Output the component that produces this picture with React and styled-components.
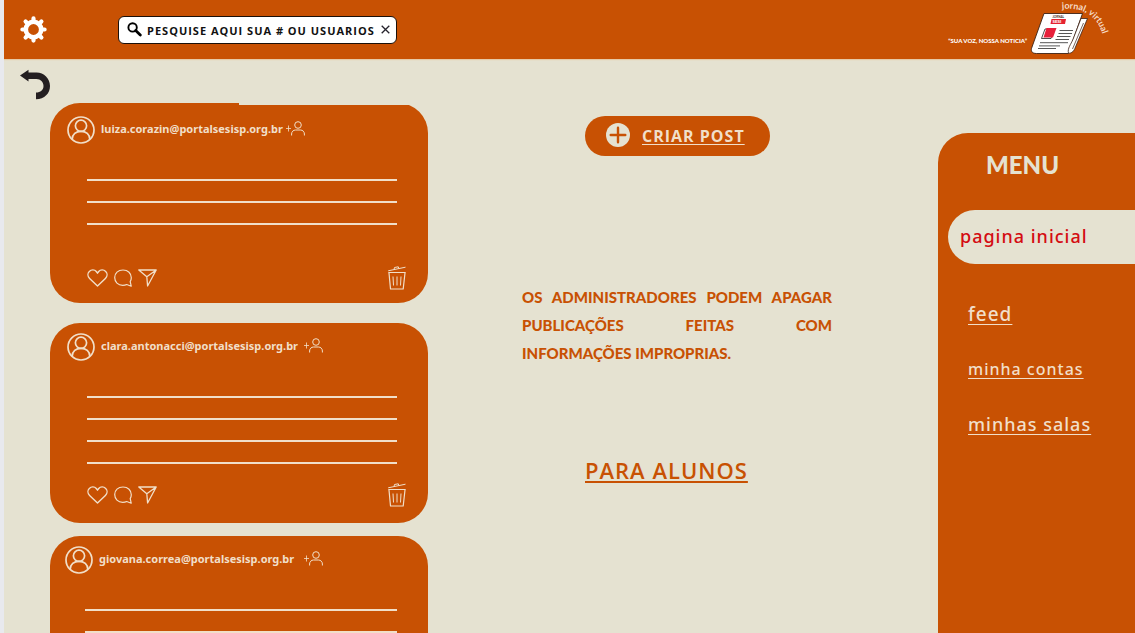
import React from "react";
import styled, { createGlobalStyle } from "styled-components";

const orange = "#c85103";
const sand = "#e5e2d1";
const cream = "#f1dfc9";

const GlobalStyle = createGlobalStyle`
  * { box-sizing: border-box; }
  body { margin: 0; background: ${sand}; font-family: "Noto Sans", sans-serif; }
  button { padding: 0; border: 0; background: none; font: inherit; color: inherit; cursor: pointer; }
  a { color: inherit; }
  svg { display: block; }
`;

const Page = styled.div`
  display: flex;
  flex-direction: column;
  height: 100vh;
  overflow: hidden;
  border-left: 4px solid #e8e9ee;
  background: ${sand};
`;

const TopBar = styled.header`
  display: flex;
  flex: none;
  align-items: center;
  height: 59px;
  padding: 0 22px 0 16px;
  background: ${orange};
  box-shadow: 0 1px 1px #e6c9a6;
`;

const IconButton = styled.button`
  flex: none;
  display: flex;
  align-items: center;
  justify-content: center;
`;

const Search = styled.label`
  display: flex;
  align-items: center;
  width: 279px;
  height: 28px;
  margin: 0 auto 0 71px;
  padding: 0 6px 0 8px;
  gap: 5px;
  border: 1px solid #1b1009;
  border-radius: 6px;
  background: #fff;
`;

const SearchInput = styled.input`
  flex: 1;
  min-width: 0;
  padding: 1px 0 0;
  border: 0;
  outline: 0;
  background: none;
  font: 700 11px "Open Sans", sans-serif;
  letter-spacing: 1px;
  color: #111;
  &::placeholder { color: #111; opacity: 1; }
`;

const Brand = styled.div`
  display: flex;
  align-items: flex-start;
  height: 59px;
  gap: 3px;
`;

const Tagline = styled.span`
  padding-top: 37px;
  font: 900 6px/8px Lato, sans-serif;
  color: #fff;
  white-space: nowrap;
`;

const Main = styled.main`
  display: grid;
  flex: 1;
  min-height: 0;
  grid-template-columns: 424fr 510fr 197fr;
`;

const FeedColumn = styled.section`
  min-width: 0;
  padding: 10px 0 0 16px;
  overflow-y: auto;
  scrollbar-width: none;
`;

const Feed = styled.div`
  display: flex;
  flex-direction: column;
  margin: 2px 0 0 30px;
`;

const Card = styled.article`
  position: relative;
  display: flex;
  flex-direction: column;
  min-height: 200px;
  margin-bottom: ${(p) => p.$gap}px;
  padding: ${(p) => p.$top}px 21px ${(p) => 26 - p.$top}px ${(p) => p.$inset}px;
  border-radius: 30px;
  background: ${orange};
  color: ${cream};
`;

const CardEdge = styled.span`
  position: absolute;
  top: 0;
  left: 50%;
  right: 0;
  height: 2px;
  background: ${sand};
`;

const CardHeader = styled.header`
  display: flex;
  align-items: center;
  height: 28px;
`;

const Email = styled.span`
  margin-left: 6px;
  padding-bottom: 3px;
  font: 700 11px "Noto Sans", sans-serif;
  white-space: nowrap;
`;

const FollowButton = styled(IconButton)`
  margin-left: ${(p) => p.$gap}px;
  padding-bottom: 4px;
`;

const Lines = styled.div`
  display: flex;
  flex-direction: column;
  gap: 20px;
  margin: 35px 10px 0 20px;
`;

const Line = styled.span`
  height: 2px;
  background: ${cream};
`;

const CardFooter = styled.footer`
  display: flex;
  align-items: center;
  height: 24px;
  margin-top: auto;
  padding-left: 20px;
  gap: 6px;
`;

const DeleteButton = styled(IconButton)`
  margin-left: auto;
`;

const Center = styled.section`
  display: flex;
  flex-direction: column;
  align-items: flex-start;
  min-width: 0;
  padding: 57px 106px 0 94px;
`;

const CreateButton = styled.button`
  display: flex;
  align-items: center;
  width: 185px;
  height: 40px;
  margin-left: 63px;
  padding-left: 20px;
  gap: 11px;
  border-radius: 20px;
  background: ${orange};
  color: ${cream};
  font: 700 16px "Open Sans", sans-serif;
  letter-spacing: 1px;
  text-decoration: underline;
  text-underline-offset: 2px;
  white-space: nowrap;
`;

const Notice = styled.p`
  margin: 127px 0 0;
  font: 900 15px/28px Lato, sans-serif;
  text-align: justify;
  color: ${orange};
`;

const StudentsLink = styled.a`
  margin: 89px 0 0 63px;
  font: 600 22px/28px "Open Sans", sans-serif;
  letter-spacing: 1px;
  text-underline-offset: 2px;
  color: ${orange};
  white-space: nowrap;
`;

const Menu = styled.nav`
  display: flex;
  flex-direction: column;
  min-width: 0;
  margin-top: 74px;
  border-radius: 30px 0 0 0;
  background: ${orange};
  color: ${cream};
`;

const MenuTitle = styled.h2`
  margin: 16px 0 30px 48px;
  font: 900 24px/31px Lato, sans-serif;
  color: ${sand};
`;

const MenuLink = styled.a`
  display: flex;
  align-items: center;
  height: 55px;
  padding: 0 0 2px 30px;
  font: 500 ${(p) => p.$size}px "Noto Sans", sans-serif;
  letter-spacing: 1px;
  text-underline-offset: 3px;
  white-space: nowrap;
`;

const ActiveLink = styled(MenuLink)`
  height: 54px;
  margin: 0 0 23px 10px;
  padding-left: 12px;
  border-radius: 27px 0 0 27px;
  background: ${sand};
  color: #d40c12;
  text-decoration: none;
`;

const GearIcon = () => (
  <svg width="27" height="27" viewBox="0 0 27 27" fill="none" stroke="#fff">
    <circle cx="13.5" cy="13.5" r="7.7" strokeWidth="4.6" />
    <g strokeWidth="4.2" strokeLinecap="round">
      <path d="M13.5 2.400v2M13.5 22.600v2M2.400 13.5h2M22.600 13.5h2M5.600 5.600l1.400 1.400M20 20l1.400 1.400M5.600 21.400L7 20M20 7l1.400-1.400" />
    </g>
  </svg>
);

const SearchIcon = () => (
  <svg width="15" height="15" viewBox="0 0 15 15" fill="none" stroke="#000">
    <circle cx="5.6" cy="5.4" r="4.2" strokeWidth="1.9" />
    <path d="M8.7 8.6l4.6 4.5" strokeWidth="2.8" strokeLinecap="round" />
  </svg>
);

const CloseIcon = () => (
  <svg width="9" height="9" viewBox="0 0 9 9" stroke="#25222c" strokeWidth="1.3">
    <path d="M.7.7l7.6 7.6M8.3.7L.7 8.3" />
  </svg>
);

const BackIcon = () => (
  <svg width="32" height="32" viewBox="0 0 32 32">
    <path d="M0 6.500L8.500.8v2.700h8C24 3.500 30 9.500 30 17s-5.500 13-14 13.300v-6.800c4.500 0 7.500-2.500 7.500-6.500s-3-7-7-7h-8v2.500z" fill="#241f21" />
  </svg>
);

const PaperLogo = () => (
  <svg width="83" height="56" viewBox="0 0 83 56">
    <path d="M14 13.500h38.500L42 43c-2 6-1 8.500-3.500 10.500H6.500c-5 0-6-3-4.500-6.500z" fill="#fff" stroke="#3b2115" strokeWidth=".9" />
    <path d="M38.500 53.300c-1.300-5 2.500-9 4.500-14L51 18.500h6.500L45.500 47c-1.500 4-3.500 6.300-7 6.300z" fill="#fff" stroke="#3b2115" strokeWidth=".8" />
    <path d="M53.500 23l-11 26" stroke="#3b2115" strokeWidth=".7" />
    <path d="M21.500 19h14.500l-1 5H20.500z" fill="#e52331" />
    <text x="22.500" y="23.400" fontFamily="Lato, sans-serif" fontSize="4.500" fontWeight="900" fill="#fff">SESI</text>
    <text x="22.500" y="18" fontFamily="Lato, sans-serif" fontSize="3" fontWeight="700" fill="#3b2115">JORNAL</text>
    <path d="M15 29h9.500l-3.500 9.500H11.500z" fill="#fff" stroke="#222" strokeWidth=".8" />
    <path d="M16.500 28h10l-3.500 9.500H13.500z" fill="#e7203b" />
    <path d="M29.500 30.500H43M28.500 33.500H42M27 36.500h13.500M25.500 39.500h13.500M10 42.700h28M9 45.900h21M8 48.500h18" stroke="#444" strokeWidth=".9" />
    <path id="brand-arc" d="M32 9C45 8 55 10 62 17C68 22 71 28 75 42" fill="none" />
    <text fontFamily="Lato, sans-serif" fontSize="9" fontWeight="700" fill="#f6dcc8">
      <textPath href="#brand-arc">jornal, virtual</textPath>
    </text>
  </svg>
);

const AvatarIcon = () => (
  <svg width="28" height="28" viewBox="0 0 28 28" fill="none" stroke={cream} strokeWidth="1.7">
    <circle cx="14" cy="14" r="13" />
    <circle cx="14" cy="9.800" r="5.600" />
    <path d="M5.200 23.300c0-5 3.800-8 8.800-8s8.800 3 8.800 8" />
  </svg>
);

const FollowIcon = () => (
  <svg width="19" height="15" viewBox="0 0 19 15" fill="none" stroke={cream}>
    <circle cx="12" cy="4" r="3.300" />
    <path d="M5.600 14.500v-1.500c0-2.300 1.700-4 4-4h4.800c2.300 0 4 1.700 4 4v1.500" />
    <path d="M0 7.500h5M2.500 4.500v6" strokeWidth=".8" />
  </svg>
);

const HeartIcon = () => (
  <svg width="21" height="18" viewBox="0 0 21 18" fill="none" stroke={cream} strokeWidth="1.400" strokeLinejoin="round">
    <path d="M10.500 17L2.600 9.400C.4 7.200.5 4.200 2.300 2.400c2-2 5.200-2 7 .1l1.200 1.700 1.200-1.700c1.800-2.100 5-2.100 7-.1 1.800 1.800 1.900 4.800-.3 7z" />
  </svg>
);

const CommentIcon = () => (
  <svg width="18" height="18" viewBox="0 0 18 18" fill="none" stroke={cream} strokeWidth="1.200" strokeLinejoin="round">
    <path d="M17.200 17.200l-1-4.600c.7-1.100 1.100-2.400 1.100-3.800C17.300 4.300 14 1 9 1S.7 4.300.7 8.600s3.300 7.800 8 7.800c1.600 0 2.900-.3 4-.9z" />
  </svg>
);

const ShareIcon = () => (
  <svg width="19" height="18" viewBox="0 0 19 18" fill="none" stroke={cream} strokeWidth="1.300" strokeLinejoin="round">
    <path d="M.8 1h17.400L9.600 17 8.800 7.800zM8.800 7.800L18.200 1" />
  </svg>
);

const TrashIcon = () => (
  <svg width="20" height="24" viewBox="0 0 20 24" fill="none" stroke={cream} strokeLinejoin="round">
    <path d="M1.300 6.500h17.400M2 7l1.500 16h12.700L18 7" strokeWidth="1.200" />
    <path d="M1.200 4.800L18.500 1.200M7 3.500l.5-2 3.800-.7.500 1.700M6 10.500l.5 9M10 10.500v9M14 10.500l-.5 9" />
  </svg>
);

const PlusIcon = () => (
  <svg width="26" height="26" viewBox="0 0 26 26">
    <circle cx="13" cy="12" r="12" fill={sand} />
    <path d="M13 4.700v14.600M5.700 12h14.600" stroke={orange} strokeWidth="2.4" strokeLinecap="round" />
  </svg>
);

const posts = [
  { email: "luiza.corazin@portalsesisp.org.br", lines: 3, gap: 20, top: 13, inset: 17, followGap: 3, edge: true },
  { email: "clara.antonacci@portalsesisp.org.br", lines: 4, gap: 13, top: 10, inset: 17, followGap: 6 },
  { email: "giovana.correa@portalsesisp.org.br", lines: 4, gap: 20, top: 10, inset: 15, followGap: 10 },
];

const Post = ({ post }) => (
  <Card $gap={post.gap} $top={post.top} $inset={post.inset}>
    {post.edge && <CardEdge />}
    <CardHeader>
      <AvatarIcon />
      <Email>{post.email}</Email>
      <FollowButton $gap={post.followGap} aria-label="Seguir">
        <FollowIcon />
      </FollowButton>
    </CardHeader>
    <Lines>
      {Array.from({ length: post.lines }, (_, i) => (
        <Line key={i} />
      ))}
    </Lines>
    <CardFooter>
      <IconButton aria-label="Curtir"><HeartIcon /></IconButton>
      <IconButton aria-label="Comentar"><CommentIcon /></IconButton>
      <IconButton aria-label="Compartilhar"><ShareIcon /></IconButton>
      <DeleteButton aria-label="Apagar"><TrashIcon /></DeleteButton>
    </CardFooter>
  </Card>
);

export default function App() {
  return (
    <Page>
      <GlobalStyle />
      <TopBar>
        <IconButton aria-label="Configurações"><GearIcon /></IconButton>
        <Search>
          <SearchIcon />
          <SearchInput type="text" aria-label="Pesquisar" placeholder="PESQUISE AQUI SUA # OU USUARIOS" />
          <IconButton aria-label="Limpar"><CloseIcon /></IconButton>
        </Search>
        <Brand>
          <Tagline>“SUA VOZ, NOSSA NOTICIA”</Tagline>
          <PaperLogo />
        </Brand>
      </TopBar>
      <Main>
        <FeedColumn>
          <IconButton aria-label="Voltar"><BackIcon /></IconButton>
          <Feed>
            {posts.map((post) => (
              <Post key={post.email} post={post} />
            ))}
          </Feed>
        </FeedColumn>
        <Center>
          <CreateButton>
            <PlusIcon />
            CRIAR POST
          </CreateButton>
          <Notice>OS ADMINISTRADORES PODEM APAGAR PUBLICAÇÕES FEITAS COM INFORMAÇÕES&nbsp;IMPROPRIAS.</Notice>
          <StudentsLink href="#alunos">PARA ALUNOS</StudentsLink>
        </Center>
        <Menu>
          <MenuTitle>MENU</MenuTitle>
          <ActiveLink href="#inicio" $size={18}>pagina inicial</ActiveLink>
          <MenuLink href="#feed" $size={19}>feed</MenuLink>
          <MenuLink href="#contas" $size={16}>minha contas</MenuLink>
          <MenuLink href="#salas" $size={18}>minhas salas</MenuLink>
        </Menu>
      </Main>
    </Page>
  );
}
